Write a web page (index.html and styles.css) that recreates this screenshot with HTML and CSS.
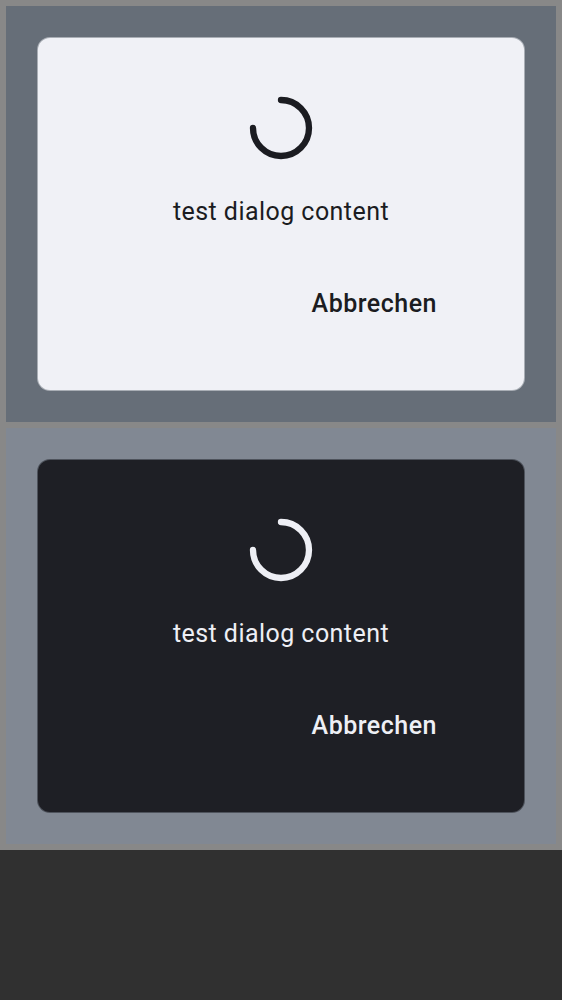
FILE: index.html
```html
<!DOCTYPE html>
<html lang="de">
<head>
<meta charset="utf-8">
<title>Dialog</title>
<link rel="stylesheet" href="styles.css">
</head>
<body>
<main class="previews">
  <section class="preview light">
    <div class="dialog">
      <svg class="spinner" viewBox="0 0 64 64"><path d="M32 4A28 28 0 1 1 4 32"/></svg>
      <p class="message">test dialog content</p>
      <button class="cancel">Abbrechen</button>
    </div>
  </section>
  <section class="preview dark">
    <div class="dialog">
      <svg class="spinner" viewBox="0 0 64 64"><path d="M32 4A28 28 0 1 1 4 32"/></svg>
      <p class="message">test dialog content</p>
      <button class="cancel">Abbrechen</button>
    </div>
  </section>
</main>
</body>
</html>
```

FILE: styles.css
```css
* { box-sizing: border-box; }
body { margin: 0; background: #303030; font-family: Roboto, sans-serif; }
.previews { height: 850px; padding: 6px; background: #888888; }
.preview { height: 416px; padding: 32px; }
.preview + .preview { margin-top: 6px; }
.light { background: #666e78; --surface: #f0f1f6; --ink: #1b1c21; --edge: #a9aeb5; }
.dark { background: #818893; --surface: #1e1f25; --ink: #eeeff5; --edge: #4e535c; }
.dialog { display: flex; flex-direction: column; align-items: center; height: 352px; padding-top: 58px; border-radius: 12px; background: var(--surface); color: var(--ink); box-shadow: 0 0 0 1px var(--edge); }
.spinner { width: 64px; height: 64px; fill: none; stroke: var(--ink); stroke-width: 6.3; stroke-linecap: round; }
.message { margin: 34px 0 0; font-size: 25px; line-height: 36px; letter-spacing: 0.45px; }
.cancel { align-self: flex-end; margin: 56px 87px 0 0; padding: 0; border: 0; background: none; color: inherit; font: 500 25px/36px Roboto, sans-serif; letter-spacing: 0.5px; }
```
